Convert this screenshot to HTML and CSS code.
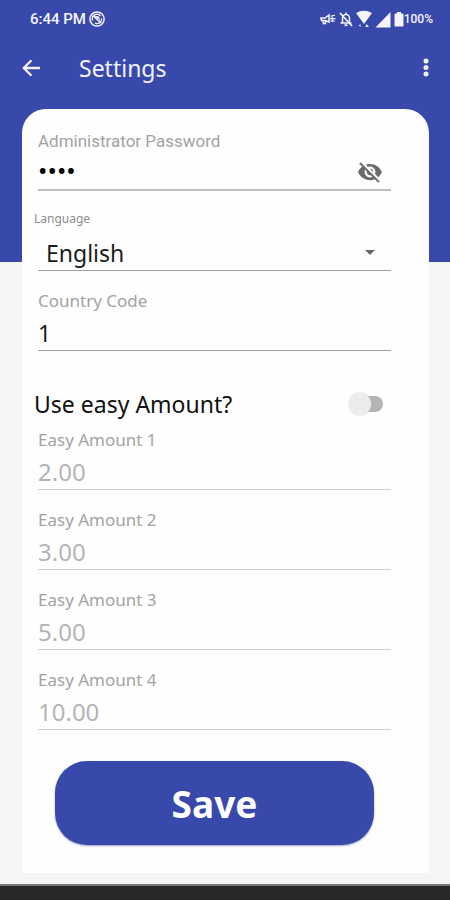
FILE: index.html
```html
<!DOCTYPE html>
<html lang="en">
<head>
<meta charset="utf-8">
<meta name="viewport" content="width=device-width, initial-scale=1">
<title>Settings</title>
<link rel="stylesheet" href="styles.css">
</head>
<body>
<div class="status">
  <span class="clock">6:44 PM</span>
  <svg class="dnd" width="16" height="16" viewBox="0 0 16 16" fill="none" stroke="currentColor"><circle cx="8" cy="8" r="7.100" stroke-width="1.500"/><path d="M3.600 9.500A4.600 4.600 0 0 1 11.500 5M12.500 7.500A4.600 4.600 0 0 1 6 12.200" stroke-width="1.300"/><path d="M4 4.500L12 12" stroke-width="1.600"/><path d="M6 5.500L9.500 5.500L10.500 8.500Z" fill="currentColor" stroke-width=".6"/></svg>
  <span class="spacer"></span>
  <svg width="16" height="14" viewBox="0 0 16 14" fill="none" stroke="currentColor" stroke-width="1.500"><path d="M1 6H5L9 3V10L5.500 8.500H1.500ZM3 8.500L3.500 11.500H5.500V9"/><path d="M10.500 4.200L15 3.200M10 6.600H15.500M10.500 9H15M12.300 3V10" stroke-width="1.100"/></svg>
  <svg width="14" height="16" viewBox="0 0 14 16" fill="none" stroke="currentColor" stroke-width="1.500"><path d="M3.500 11.500V7A3.500 3.500 0 0 1 10.500 7V11.500M1.500 12H12.500M7 1.500V3.500"/><path d="M5.500 14.200H8.500" stroke-width="1.800"/><path d="M1 2L13 15" stroke-width="1.700"/></svg>
  <svg width="16" height="18" viewBox="0 0 16 18" fill="currentColor"><path d="M0 3Q8 -1.500 16 3L8 14Z"/><path d="M4.500 14V17L2.800 15.500ZM10.500 14L13 17H9.500Z"/></svg>
  <svg width="16" height="17" viewBox="0 0 16 17" fill="currentColor"><path d="M15.500 1V16.500H.5Z"/></svg>
  <svg width="10" height="16" viewBox="0 0 10 16" fill="currentColor"><path d="M3 1H7V2.500H8.500Q9.500 2.500 9.500 3.500V14.500Q9.500 15.500 8.500 15.500H1.500Q.5 15.500 .5 14.500V3.500Q.5 2.500 1.500 2.500H3Z"/></svg>
  <span class="percent">100%</span>
</div>
<header class="appbar">
  <button class="icon-button" type="button" aria-label="Back"><svg width="18" height="18" viewBox="0 0 18 18" fill="none" stroke="currentColor" stroke-width="2.300"><path d="M18 9H2M9.500 1.200L1.800 9L9.500 16.800"/></svg></button>
  <h1>Settings</h1>
  <button class="icon-button" type="button" aria-label="More options"><svg width="6" height="20" viewBox="0 0 6 20" fill="currentColor"><circle cx="3" cy="3" r="2.500"/><circle cx="3" cy="9.500" r="2.500"/><circle cx="3" cy="16" r="2.500"/></svg></button>
</header>
<main>
  <form class="card">
    <div class="field strong">
      <label class="roboto" for="password">Administrator Password</label>
      <div class="control">
        <input class="password" id="password" type="password" value="1234">
        <button class="reveal" type="button" aria-label="Show password"><svg width="26" height="26" viewBox="0 0 24 24" fill="currentColor"><path d="M12 7c2.760 0 5 2.240 5 5 0 .65-.13 1.260-.36 1.830l2.920 2.920c1.510-1.260 2.700-2.890 3.430-4.750-1.730-4.390-6-7.500-11-7.500-1.400 0-2.740.25-3.980.7l2.160 2.160C10.740 7.130 11.350 7 12 7zM2 4.270l2.280 2.280.46.46C3.080 8.300 1.780 10.020 1 12c1.730 4.390 6 7.500 11 7.500 1.550 0 3.030-.3 4.380-.84l.42.42L19.730 22 21 20.730 3.270 3 2 4.270zM7.530 9.800l1.550 1.550c-.05.21-.08.43-.08.65 0 1.660 1.340 3 3 3 .22 0 .44-.03.65-.08l1.550 1.550c-.67.33-1.410.53-2.200.53-2.760 0-5-2.240-5-5 0-.79.2-1.530.53-2.200zm4.310-.78l3.150 3.150.02-.16c0-1.660-1.340-3-3-3l-.17.01z"/></svg></button>
      </div>
    </div>
    <div class="field">
      <label class="small" for="language">Language</label>
      <div class="control">
        <select id="language"><option>English</option></select>
        <svg class="caret" width="10" height="5" viewBox="0 0 10 5" fill="currentColor"><path d="M0 0H10L5 5Z"/></svg>
      </div>
    </div>
    <div class="field">
      <label for="country">Country Code</label>
      <div class="control"><input id="country" type="text" value="1"></div>
    </div>
    <div class="toggle">
      <label for="easy">Use easy Amount?</label>
      <input id="easy" type="checkbox" role="switch">
    </div>
    <div class="field muted">
      <label for="a1">Easy Amount 1</label>
      <div class="control"><input id="a1" type="text" value="2.00" disabled></div>
    </div>
    <div class="field muted">
      <label for="a2">Easy Amount 2</label>
      <div class="control"><input id="a2" type="text" value="3.00" disabled></div>
    </div>
    <div class="field muted">
      <label for="a3">Easy Amount 3</label>
      <div class="control"><input id="a3" type="text" value="5.00" disabled></div>
    </div>
    <div class="field muted">
      <label for="a4">Easy Amount 4</label>
      <div class="control"><input id="a4" type="text" value="10.00" disabled></div>
    </div>
    <button class="save" type="button">Save</button>
  </form>
</main>
<div class="navbar"></div>
</body>
</html>
```
FILE: styles.css
```css
* { box-sizing: border-box; }

body {
  margin: 0;
  min-height: 100vh;
  display: flex;
  flex-direction: column;
  font-family: "Noto Sans", sans-serif;
  background: linear-gradient(#3949ab 262px, #f5f5f4 262px);
}

button, input, select {
  font: inherit;
  color: inherit;
  border: 0;
  padding: 0;
  margin: 0;
  background: none;
}

svg { display: block; flex: none; }

.status {
  height: 38px;
  padding: 0 17px 0 30px;
  display: flex;
  align-items: center;
  gap: 3px;
  color: #f4f5ff;
  font-family: Roboto, sans-serif;
}
.clock { font-size: 15px; font-weight: 500; }
.spacer { flex: 1; }
.percent { margin-left: -3px; font-size: 12px; font-weight: 500; }

.appbar {
  height: 60px;
  padding: 0 21px 0 22px;
  display: flex;
  align-items: center;
  color: #f0f2ff;
}
.appbar h1 {
  flex: 1;
  margin: 0 0 0 39px;
  font-size: 23px;
  font-weight: 400;
  line-height: 32px;
}
.icon-button { display: flex; }

main { padding: 11px 21px 11px 22px; flex: 1; }

.card {
  display: flex;
  flex-direction: column;
  padding: 20px 38px 28px 16px;
  background: #fefefe;
  border-radius: 24px 24px 0 0;
}

.field { margin-bottom: 18px; }
.field label {
  display: block;
  font-size: 17px;
  line-height: 24px;
  color: #a3a3a3;
}
.field .roboto { font-family: Roboto, sans-serif; }
.field .small {
  margin-left: -4px;
  font-size: 12px;
  line-height: 20px;
  padding-bottom: 4px;
  color: #8c8c8c;
}
.control {
  display: flex;
  align-items: center;
  height: 38px;
  padding-top: 2px;
  border-bottom: 1px solid #a0a0a0;
  font-size: 23px;
  color: #1c1c1c;
}
.strong .control { border-bottom: 2px solid #bebebe; }
.muted .control { border-bottom-color: #cfcfcf; font-size: 24px; }
.control input, .control select {
  flex: 1;
  min-width: 0;
  height: 34px;
  line-height: 34px;
  outline: 0;
}
.control .password { font-family: Roboto, sans-serif; font-size: 28px; color: #000; }
.control select { appearance: none; padding-left: 8px; }
.muted input { color: #b4b4b4; }
.reveal { margin-right: 8px; color: #6b6b6b; }
.caret { margin-right: 16px; color: #666; pointer-events: none; }

.toggle {
  display: flex;
  align-items: center;
  justify-content: space-between;
  margin: 20px 8px 9px -4px;
  line-height: 30px;
  font-size: 23px;
  color: #111;
}
.toggle input {
  appearance: none;
  display: flex;
  align-items: center;
  width: 30px;
  height: 16px;
  border-radius: 8px;
  background: #b5b5b5;
}
.toggle input::before {
  content: "";
  width: 22px;
  height: 22px;
  flex: none;
  margin-left: -4px;
  border-radius: 50%;
  background: #ebebeb;
  box-shadow: 0 0 2px #ccc;
}
.toggle input:checked::before { margin-left: 12px; }

.save {
  height: 84px;
  margin: 13px 17px 0;
  border-radius: 32px;
  background: #3949ab;
  color: #fff;
  font-size: 37px;
  font-weight: 700;
  box-shadow: 0 1px 2px #9aa0c8;
}

.navbar {
  height: 17px;
  border-top: 2px solid #777;
  background: #282828;
}
```
